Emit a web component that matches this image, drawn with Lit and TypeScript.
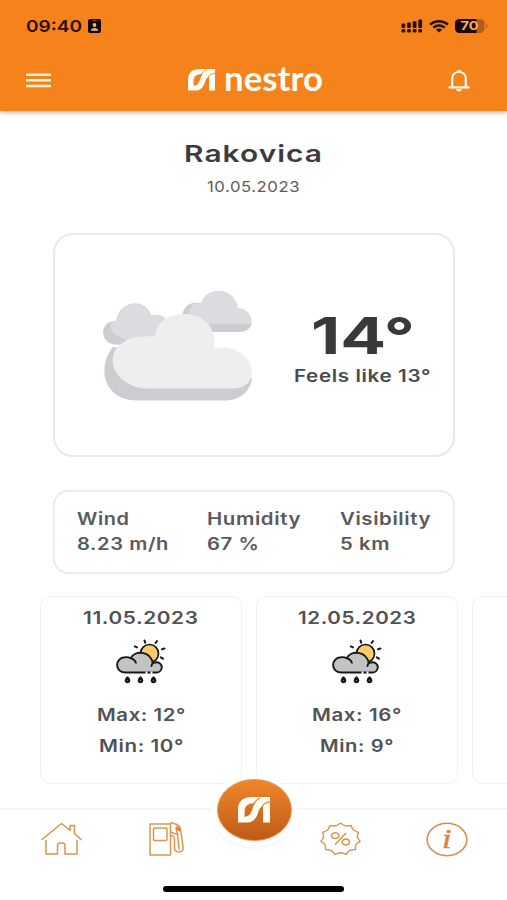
import { LitElement, html, svg, css } from "lit";
import { customElement, property } from "lit/decorators.js";

/** Single line of text fitted to a fixed width; its box runs from cap top to baseline. */
@customElement("fit-text")
class FitText extends LitElement {
  static styles = css`
    :host { display: block; flex: none; }
    svg { display: block; overflow: visible; fill: currentColor; }
  `;
  @property() text = "";
  @property({ type: Number }) w = 50;
  @property({ type: Number }) cap = 12;
  @property({ type: Number }) weight = 600;
  @property({ type: Number }) spacing = 0.5;
  @property() font = "Inter";
  @property({ type: Number }) size = 0;
  render() {
    const size = this.size || this.cap / 0.727;
    return html`<svg width=${this.w} height=${this.cap}>
      <text x="0" y=${this.cap} font-family="${this.font}, sans-serif" font-size=${size}
        font-weight=${this.weight} letter-spacing=${this.spacing}
        textLength=${this.w} lengthAdjust="spacingAndGlyphs">${this.text}</text>
    </svg>`;
  }
}

const brandMark = (w: number, h: number, gap: string) => html`
  <svg width=${w} height=${h} viewBox="0 0 92 76" preserveAspectRatio="none">
    <path fill="#fffdf6" fill-rule="evenodd" d="M0 76V38C0 12 16 0 40 0H92V76H72V27C62 30 60 40 56 52C50 68 40 76 26 76ZM19 59V42C19 27 29 18 49 18C45 23 44 28 42 35C38 50 31 58 19 59Z"/>
    <path fill="none" stroke=${gap} stroke-width="3" d="M64 2C54 6 48 12 45 24M92 15C79 15 73 20 69 31"/>
  </svg>`;

const menuIcon = html`<svg width="25" height="15" viewBox="0 0 25 15"><path stroke="#fff3dc" stroke-width="2.4" d="M0 1.7H25M0 7.3H25M0 13H25"/></svg>`;

const bellIcon = html`<svg width="22" height="23" viewBox="0 0 22 23">
  <path fill="none" stroke="#fffaf0" stroke-width="2.2" stroke-linejoin="round" d="M4.2 18V9.6C4.2 5.6 7 3 11 3S17.8 5.6 17.8 9.6V18"/>
  <path stroke="#fffaf0" stroke-width="2.2" stroke-linecap="round" d="M1.3 18.3H20.7"/>
  <path fill="#fffaf0" d="M8.3 20H13.7C13.5 21.8 12.5 22.5 11 22.5S8.5 21.8 8.3 20ZM9 3C9 0 13 0 13 3Z"/>
</svg>`;

const badgeIcon = html`<svg width="13" height="14" viewBox="0 0 13 14">
  <rect width="13" height="14" rx="2" fill="#150700"/><path stroke="#b5601c" d="M4.5 1.7H8.5"/>
  <circle cx="6.5" cy="6" r="1.9" fill="#f2b884"/><path fill="#f2b884" d="M2.8 11.8C3 8 10 8 10.2 11.8Z"/>
</svg>`;

const signalIcon = html`<svg width="22" height="14" viewBox="0 0 22 14" fill="#2b0f00">
  ${[0, 1, 2, 3].map((i) => svg`<rect x=${0.5 + i * 5.6} y=${[4.5, 3.5, 2.2, 0.5][i]} width="3.8" height=${[4.5, 5.5, 6.8, 8.5][i]} rx="1"/>
  <rect x=${0.5 + i * 5.6} y="10" width="3.8" height="3.6" rx="1.4"/>`)}
</svg>`;

const wifiIcon = html`<svg width="20" height="13" viewBox="0 0 20 13">
  <path fill="none" stroke="#2b0f00" stroke-width="2.4" d="M1 4.6C6 .2 14 .2 19 4.6M4.3 7.6C7.6 4.8 12.4 4.8 15.7 7.6"/>
  <path fill="#2b0f00" d="M6.8 9.6C8.6 8.2 11.4 8.2 13.2 9.6L10 12.5Z"/>
</svg>`;

const batteryIcon = html`<svg width="33" height="14" viewBox="0 0 33 14">
  <defs><clipPath id="charge"><rect width="21.5" height="14"/></clipPath></defs>
  <rect width="29.5" height="14" rx="4.5" fill="#b55c17"/>
  <rect width="29.5" height="14" rx="4.5" fill="#1d0900" clip-path="url(#charge)"/>
  <path fill="#c9691b" d="M30.8 4.8C33.3 5.5 33.3 8.5 30.8 9.2Z"/>
  <text x="5.5" y="11.2" font-family="Inter, sans-serif" font-weight="700" font-size="11.5" fill="#f3ac6c" textLength="18" lengthAdjust="spacingAndGlyphs">70</text>
</svg>`;

const cloudsPicture = html`<svg width="149" height="111" viewBox="0 0 149 111">
  <path fill="#cfccd1" d="M12 54.5C-4 53-4 31 13 31C16 10 43 8 48 26C58 22 66 29 66 40L40 56Z"/>
  <path fill="#dddbdf" d="M19 48C10 46 6 38 8 34C10 31.5 12 31 14 31C16 10 43 7 48.5 26C58 22 66 29 66 42L32 56Z"/>
  <path fill="#cfccd1" d="M80 22C83 14 89 12 96 13L140 26L149 33C148 38 143 42 137 42H94C84 42 78 32 80 22Z"/>
  <path fill="#dddbdf" d="M86 23C88 14 93 12 98 13C104-4 131-4 135 18C144 18 149 25 149 34H92C88 33 85 28 86 23Z"/>
  <path fill="#cfccd1" d="M10 57C-6 76-1 110 34 110.5H122C136 110.5 147 102 149 89L120 70Z"/>
  <path fill="#eeeeee" d="M10 73C8 56 24 44 52 46.500C54 17 106 16 111 47C112 51 111.500 55 111 58.500C130 54 149 65 149 84C148 93 140 98.500 130 98.500H46C24 98.500 11 85 10 73Z"/>
</svg>`;

const rainIcon = html`<svg width="50" height="46" viewBox="0 0 50 46" fill="none" stroke="#17171a" stroke-width="1.9" stroke-linecap="round">
  <circle cx="33.5" cy="14.5" r="9" fill="#f9cb6c" stroke-width="1.7"/>
  <path stroke-width="2" d="M28.5 1.5L29.2 3.6M41 2L39.6 4M48.5 9.5L46 10.2M18.8 7.3L21 8.4M44.8 18.3L47 19.6"/>
  <path fill="#c3c3c5" stroke-linejoin="round" d="M9 33.5C-1.5 33.5-1.5 18.6 9 18.3C11 17.9 13 18.4 14.7 19.2C18.5 11.5 34 11 36.8 24.2C43 21.5 46 25.5 45.8 28.5C45.5 31.5 43 33.5 40.5 33.5Z"/>
  <path d="M14.7 19.2C17.5 20 19.2 21.5 19.9 23.8M36.8 24.2C36 25 35.5 26 35.5 27"/>
  <path stroke="#fff" stroke-width="2.3" stroke-linecap="butt" d="M29.5 33.6H31.5M34.5 33.6H36.5"/>
  <g fill="#fff" stroke-width="2.5"><path d="M11.5 38.8C9.5 40.5 9.3 43 11.5 43S13.500 40.500 11.500 38.800Z"/><path d="M24.500 38.800C22.500 40.500 22.300 43 24.500 43S26.500 40.500 24.500 38.800Z"/><path d="M37.500 38.800C35.500 40.500 35.300 43 37.500 43S39.500 40.500 37.500 38.800Z"/></g>
</svg>`;

const homeIcon = html`<svg width="41" height="34" viewBox="0 0 41 34" fill="none" stroke="#d99350" stroke-width="1.5" stroke-linejoin="round" stroke-linecap="round">
  <path d="M1 17.5L20.5 1.5L29 8.3V3.5H33.5V11.5L40 17.5"/>
  <path d="M5 18.5V32H16.5V23.5Q16.5 21 19 21H21.5Q24 21 24 23.5V32H36V18.5"/>
</svg>`;

const pumpIcon = html`<svg width="35" height="34" viewBox="0 0 35 34" fill="none" stroke="#dd954e" stroke-width="1.5" stroke-linejoin="round" stroke-linecap="round">
  <rect x="1" y="2" width="20.5" height="31"/><rect x="4.5" y="6" width="13.5" height="12.5" rx="1"/>
  <path d="M21.5 13.5C25 13.5 25.5 15 25.5 18V26C25.5 31 34.5 31.5 34.200 26L31.500 7Q31 4 28 2.500L22 .8M21.500 10L25 11.500L28.500 12L27 6L31 9M28.500 12L30 27"/>
  <path fill="#e0813a" stroke="none" d="M27 3.500L31.500 6.500L30.500 9L27.500 7Z"/>
</svg>`;

const starPoints = () => {
  const n = 11;
  let d = "";
  for (let i = 0; i < n; i++) {
    const a = (i / n) * 2 * Math.PI - Math.PI / 2;
    const b = a + (2 * Math.PI) / n;
    const m = (a + b) / 2;
    const p = (t: number, r: number) => `${(20.5 + 19.8 * r * Math.cos(t)).toFixed(1)} ${(17 + 16 * r * Math.sin(t)).toFixed(1)}`;
    d += `${i ? "" : `M${p(a, 1)}`}Q${p(a + (m - a) * 0.5, 0.88)} ${p(m, 0.86)}Q${p(b - (b - m) * 0.5, 0.88)} ${p(b, 1)}`;
  }
  return d + "Z";
};

const offerIcon = html`<svg width="41" height="34" viewBox="0 0 41 34" fill="none" stroke="#dc9450" stroke-width="1.4" stroke-linejoin="round">
  <path d=${starPoints()}/>
  <g stroke-width="1.6"><ellipse cx="15.2" cy="13.6" rx="3.7" ry="2.9"/><ellipse cx="25.8" cy="20" rx="3.7" ry="2.9"/><path d="M26 11L15 22.500"/></g>
</svg>`;

const infoIcon = html`<svg width="42" height="35" viewBox="0 0 42 35">
  <ellipse cx="21" cy="17.5" rx="19.8" ry="16.2" fill="none" stroke="#d98f4a" stroke-width="1.6"/>
  <text x="16" y="26" font-family="Liberation Serif, serif" font-style="italic" font-weight="400" font-size="27" fill="#de8439" stroke="#de8439" stroke-width=".5" textLength="9.5" lengthAdjust="spacingAndGlyphs">i</text>
</svg>`;

const days = [
  { date: "11.05.2023", dw: 115.5, max: "Max: 12°", xw: 89, min: "Min: 10°", nw: 85 },
  { date: "12.05.2023", dw: 118.5, max: "Max: 16°", xw: 90, min: "Min: 9°", nw: 74 },
];

const stats = [
  { label: "Wind", lw: 52.5, value: "8.23 m/h", vw: 92 },
  { label: "Humidity", lw: 94, value: "67 %", vw: 52.5 },
  { label: "Visibility", lw: 91, value: "5 km", vw: 50 },
];

@customElement("app-root")
class AppRoot extends LitElement {
  static styles = css`
    :host { display: flex; flex-direction: column; width: 507px; height: 900px; overflow: hidden; background: #fff; font-family: Inter, sans-serif; color: #555558; }
    * { box-sizing: border-box; }
    svg { display: block; flex: none; }
    header { flex: none; height: 111px; background: #f6821c; box-shadow: 0 1px 5px rgba(60, 60, 70, .5); padding: 19px 19px 0 26px; }
    .status { height: 14px; display: flex; align-items: center; color: #2b0f00; }
    .status .push { margin-left: auto; }
    .status svg + svg { margin-left: 6px; }
    .clock { margin-right: 6px; }
    .bar { margin-top: 29px; height: 36px; display: grid; grid-template-columns: 80px 1fr 80px; align-items: center; }
    .bar .bell { justify-self: end; padding-right: 18px; }
    .brand { display: flex; align-items: flex-end; justify-content: center; gap: 9px; color: #fffdf6; margin-right: 4px; }
    .place { flex: none; height: 122px; padding-top: 34px; display: flex; flex-direction: column; align-items: center; gap: 18.500px; color: #3c3c3f; }
    .place .date { color: #5c5c60; }
    .now { flex: none; margin: 0 52px 0 53px; height: 224px; border: 2px solid #e9e9ea; border-radius: 20px; padding-left: 48px; display: flex; align-items: center; }
    .temps { margin: 9px 0 0 42px; display: flex; flex-direction: column; align-items: center; gap: 15.500px; color: #39393b; }
    .temps .feels { color: #4b4b4e; }
    .stats { flex: none; margin: 33px 52px 0 53px; height: 84px; border: 2px solid #ebebec; border-radius: 15px; padding: 20px 0 0 22px; display: grid; grid-template-columns: 130px 133px 1fr; }
    .stat { display: flex; flex-direction: column; gap: 13px; color: #5a5a5d; }
    .days { flex: none; height: 188px; margin: 22px 0 0 40px; display: flex; gap: 14px; overflow: hidden; }
    .day { flex: none; width: 202px; border: 1.500px solid #f1f1f2; border-radius: 10px; padding-top: 13.500px; display: flex; flex-direction: column; align-items: center; color: #525255; }
    .day .pic { margin: 15.500px 0 24px; }
    .day .min { margin-top: 19px; }
    nav { flex: none; position: relative; margin-top: 24px; height: 92px; background: #fff; border-top: 2px solid #f6f6f7; }
    .tabs { display: grid; grid-template-columns: 123px 94px 73px 100px 117px; height: 58px; align-items: center; justify-items: center; }
    .tabs .fuel { margin-right: 7px; }
    .tabs .info { margin-right: 4px; }
    .center { position: absolute; left: 211px; top: -35px; width: 86px; height: 72px; border-radius: 50%; background: #fff; box-shadow: 0 2px 3px rgba(0,0,0,.04); padding: 4px 5.500px 6px; }
    .disc { width: 75px; height: 62px; border-radius: 50%; background: linear-gradient(#f0862b, #bd5b18); border: 1.500px solid #ef9450; display: flex; align-items: center; justify-content: center; }
    .handle { width: 181px; height: 6px; border-radius: 3px; background: #000; margin: 18px 0 0 163px; }
  `;
  render() {
    return html`
      <header>
        <div class="status">
          <fit-text class="clock" text="09:40" w="56" cap="12" spacing="0"></fit-text>
          ${badgeIcon}<span class="push"></span>${signalIcon}${wifiIcon}${batteryIcon}
        </div>
        <div class="bar">
          ${menuIcon}
          <div class="brand">${brandMark(27, 21.5, "#f6821c")}<fit-text text="nestro" w="99" cap="21.5" size="34" weight="700" spacing="0" font="Lato"></fit-text></div>
          <div class="bell">${bellIcon}</div>
        </div>
      </header>
      <div class="place">
        <fit-text text="Rakovica" w="139" cap="17" weight="600" spacing="0.8"></fit-text>
        <fit-text class="date" text="10.05.2023" w="93" cap="11" weight="400"></fit-text>
      </div>
      <section class="now">
        ${cloudsPicture}
        <div class="temps">
          <fit-text text="14°" w="104" cap="37" weight="700" spacing="0"></fit-text>
          <fit-text class="feels" text="Feels like 13°" w="137" cap="12.2"></fit-text>
        </div>
      </section>
      <section class="stats">
        ${stats.map((s) => html`<div class="stat"><fit-text text=${s.label} w=${s.lw} cap="12.5"></fit-text><fit-text text=${s.value} w=${s.vw} cap="12.3"></fit-text></div>`)}
      </section>
      <section class="days">
        ${days.map((d) => html`<article class="day">
          <fit-text text=${d.date} w=${d.dw} cap="12.5"></fit-text>
          <div class="pic">${rainIcon}</div>
          <fit-text text=${d.max} w=${d.xw} cap="12.2"></fit-text>
          <fit-text class="min" text=${d.min} w=${d.nw} cap="12.2"></fit-text>
        </article>`)}
        <article class="day"></article>
      </section>
      <nav>
        <div class="tabs">
          <div>${homeIcon}</div><div class="fuel">${pumpIcon}</div><span></span><div>${offerIcon}</div><div class="info">${infoIcon}</div>
        </div>
        <div class="center"><div class="disc">${brandMark(32, 25.5, "#d66f20")}</div></div>
        <div class="handle"></div>
      </nav>
    `;
  }
}
